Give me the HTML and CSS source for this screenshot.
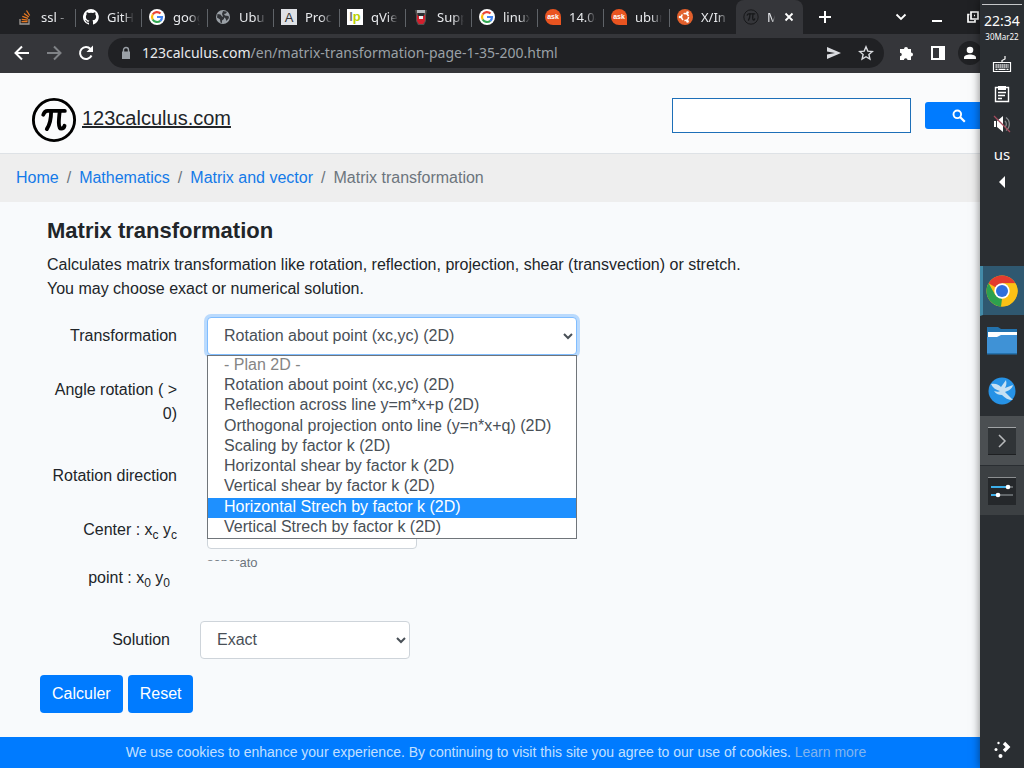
FILE: index.html
```html
<!DOCTYPE html>
<html lang="en">
<head>
    <meta charset="UTF-8">
    <meta name="viewport" content="width=device-width, initial-scale=1.0">
    <title>Matrix transformation - 123calculus.com</title>
    <link rel="stylesheet" href="styles.css">
</head>
<body>
    <div class="browser">
        <!-- Tab strip -->
        <div class="tab-strip">
            <div class="tab">
                <svg viewBox="0 0 16 16"><path d="M3 10v5h9v-5" fill="none" stroke="#a09c98" stroke-width="1.3"/><path d="M4.5 12.7h6M4.7 10.3l6 .8M5.3 7.4l5.7 2M7 4.5l4.8 3.6M9.5 1.5l3.2 5" stroke="#e87922" stroke-width="1.3"/></svg>
                <span>ssl - c</span>
            </div>
            <div class="tab">
                <svg viewBox="0 0 16 16"><path fill="#fff" d="M8 0a8 8 0 0 0-2.5 15.6c.4 0 .5-.2.5-.4v-1.5c-2.200.5-2.700-.9-2.700-.9-.4-1-.9-1.200-.9-1.200-.7-.5.1-.5.1-.5.800.1 1.200.8 1.200.8.700 1.200 1.900.9 2.300.7.100-.5.300-.9.500-1.100-1.800-.2-3.600-.9-3.600-4 0-.9.300-1.600.8-2.100-.1-.2-.4-1 .1-2.100 0 0 .7-.2 2.200.8a7.500 7.500 0 0 1 4 0c1.500-1 2.200-.8 2.200-.8.4 1.100.2 1.900.1 2.100.5.600.8 1.300.8 2.100 0 3.100-1.900 3.700-3.700 3.900.3.300.6.800.6 1.500v2.200c0 .2.100.5.600.4A8 8 0 0 0 8 0z"/></svg>
                <span>GitH</span>
            </div>
            <div class="tab">
                <svg viewBox="0 0 16 16"><use href="#google"/></svg>
                <span>goog</span>
            </div>
            <div class="tab">
                <svg viewBox="0 0 16 16"><circle cx="8" cy="8" r="7" fill="#9aa0a6"/><path fill="#303236" d="M2.500 5l3 .5 1.500 2 2 .5v2l-2 1.500v2.500l-1.500-.5-.5-3L2 8.500zM8 2l4 .8-1 1.700L9 5l1 1.500 3.500.5.500 2-2.500 3-1-2.500L8 7.500 7 5z"/></svg>
                <span>Ubu</span>
            </div>
            <div class="tab">
                <svg viewBox="0 0 16 16"><path fill="#dfe1e5" d="M0 0h16v16H0z"/><text x="8" y="13" class="mark mark-a">A</text></svg>
                <span>Proc</span>
            </div>
            <div class="tab">
                <svg viewBox="0 0 16 16"><path fill="#fff" d="M0 0h16v16H0z"/><text x="8" y="12" class="mark mark-lp"><tspan fill="#77787b">l</tspan><tspan fill="#b9d000">p</tspan></text></svg>
                <span>qVie</span>
            </div>
            <div class="tab">
                <svg viewBox="0 0 16 16"><path fill="#55504f" d="M2 1h12l-1 5v6l-2 4H5l-2-4V6z"/><path fill="#b8bcc0" d="M4 1h8v3H4z"/><path fill="#d0202e" d="M4 6h8v6l-2 3H6l-2-3z"/><path fill="#2c2c30" d="M5 4h6v3H5z"/><path fill="#eee" d="M6 7h4v3H6z"/></svg>
                <span>Supp</span>
            </div>
            <div class="tab">
                <svg viewBox="0 0 16 16"><use href="#google"/></svg>
                <span>linux</span>
            </div>
            <div class="tab">
                <svg viewBox="0 0 16 16"><path fill="#e95420" d="M8 0a8 8 0 0 1 8 8v8H8A8 8 0 1 1 8 0z"/><text x="8" y="10" class="mark mark-ask">ask</text></svg>
                <span>14.04</span>
            </div>
            <div class="tab">
                <svg viewBox="0 0 16 16"><path fill="#e95420" d="M8 0a8 8 0 0 1 8 8v8H8A8 8 0 1 1 8 0z"/><text x="8" y="10" class="mark mark-ask">ask</text></svg>
                <span>ubun</span>
            </div>
            <div class="tab last">
                <svg viewBox="0 0 16 16"><circle cx="8" cy="8" r="8" fill="#e2602c"/><circle cx="8" cy="8" r="3.500" fill="none" stroke="#fff" stroke-width="1.500" stroke-dasharray="6 1.300"/><g fill="#fff"><circle cx="3" cy="8" r="1.300"/><circle cx="10.500" cy="3.600" r="1.300"/><circle cx="10.500" cy="12.400" r="1.300"/></g></svg>
                <span>X/In</span>
            </div>
            <div class="tab active">
                <svg viewBox="0 0 16 16"><use href="#pi" stroke="#17181a"/></svg>
                <span>M</span>
                <button type="button" aria-label="Close tab"><svg viewBox="0 0 12 12"><path d="M2.500 2.500l7 7M9.500 2.500l-7 7" stroke="#fff" stroke-width="1.800"/></svg></button>
            </div>
            <button type="button" class="new-tab" aria-label="New tab"><svg viewBox="0 0 14 14"><path d="M7 1v12M1 7h12" stroke="#fff" stroke-width="2"/></svg></button>
            <div class="window-buttons">
                <button type="button" aria-label="Search tabs"><svg viewBox="0 0 14 14"><path d="M2.500 4.500L7 9l4.500-4.500" fill="none" stroke="#fff" stroke-width="1.800"/></svg></button>
                <button type="button" aria-label="Minimize"><svg viewBox="0 0 14 14"><path d="M2 11h10" stroke="#fff" stroke-width="2"/></svg></button>
                <button type="button" aria-label="Restore"><svg viewBox="0 0 14 14"><path d="M5 2h7v7H5zM8 5.500h1M3.500 4.500H2V12h7v-2" fill="none" stroke="#fff" stroke-width="1.700"/></svg></button>
            </div>
        </div>

        <!-- Toolbar -->
        <div class="toolbar">
            <button type="button" aria-label="Back"><svg viewBox="0 0 16 16"><path d="M15 8H2M8 1.500L1.500 8 8 14.500" fill="none" stroke="#fff" stroke-width="2"/></svg></button>
            <button type="button" aria-label="Forward"><svg viewBox="0 0 16 16"><path d="M1 8h13M8 1.500L14.500 8 8 14.500" fill="none" stroke="#808387" stroke-width="2"/></svg></button>
            <button type="button" aria-label="Reload"><svg viewBox="0 0 16 16"><path d="M13.500 10.500A6 6 0 1 1 12.500 4" fill="none" stroke="#fff" stroke-width="2"/><path d="M15 .5V7H8.500z" fill="#fff"/></svg></button>
            <div class="address">
                <svg class="lock" viewBox="0 0 10 14"><path d="M2.500 6V4a2.500 2.500 0 0 1 5 0v2" fill="none" stroke="#9aa0a6" stroke-width="1.400"/><path d="M1 5.500h8V13H1z" fill="#9aa0a6"/></svg>
                <span class="url"><b>123calculus.com</b>/en/matrix-transformation-page-1-35-200.html</span>
                <button type="button" aria-label="Share"><svg viewBox="0 0 16 16"><path d="M1 2l14 6-14 6V9.500L9 8 1 6.500z" fill="#dadce0"/></svg></button>
                <button type="button" aria-label="Bookmark"><svg viewBox="0 0 16 16"><path d="M8 1.800l1.800 4.300 4.600.4-3.500 3 1 4.600L8 11.700l-3.900 2.400 1-4.600-3.500-3 4.600-.4z" fill="none" stroke="#dadce0" stroke-width="1.400"/></svg></button>
            </div>
            <button type="button" aria-label="Extensions"><svg viewBox="0 0 16 16"><path d="M2 4h4a2 2 0 1 1 4 0h3v3.500a2 2 0 1 1 0 4V15H9.500a1.800 1.800 0 0 0-3.600 0H2v-3.700a1.800 1.800 0 0 0 0-3.600z" fill="#fff"/></svg></button>
            <button type="button" aria-label="Side panel"><svg viewBox="0 0 16 16"><path d="M2 2h12v12H2z" fill="none" stroke="#fff" stroke-width="2"/><path d="M9 2h5v12H9z" fill="#fff"/></svg></button>
            <button type="button" class="avatar" aria-label="Profile"><svg viewBox="0 0 16 16"><circle cx="8" cy="5" r="3.300" fill="#fff"/><path d="M2 14v-1.500C2 10.500 5 9.500 8 9.500s6 1 6 3V14z" fill="#fff"/></svg></button>
        </div>

        <!-- Page -->
        <div class="page">
            <header class="site-header">
                <a class="brand" href="#">
                    <svg viewBox="0 0 48 48"><use href="#pi" stroke="#000"/></svg>
                    <span>123calculus.com</span>
                </a>
                <form class="search">
                    <input type="text" aria-label="Search">
                    <button type="button" aria-label="Search"><svg viewBox="0 0 14 14"><circle cx="5.300" cy="5.300" r="3.800" fill="none" stroke="#fff" stroke-width="1.900"/><path d="M8 8l4.800 4.800" stroke="#fff" stroke-width="2.200"/></svg></button>
                </form>
            </header>

            <nav class="breadcrumb">
                <a href="#">Home</a>
                <a href="#">Mathematics</a>
                <a href="#">Matrix and vector</a>
                <span>Matrix transformation</span>
            </nav>

            <main>
                <div class="intro">
                    <h1>Matrix transformation</h1>
                    <p>Calculates matrix transformation like rotation, reflection, projection, shear (transvection) or stretch.<br>You may choose exact or numerical solution.</p>
                </div>

                <form class="calc-form">
                    <div class="options">
                        <div class="form-row">
                            <label for="transformation">Transformation</label>
                            <div class="field wide">
                                <select id="transformation" class="form-control focused">
                                    <option>Rotation about point (xc,yc) (2D)</option>
                                </select>
                                <ul class="dropdown" role="listbox" aria-label="Transformation">
                                    <li class="group">- Plan 2D -</li>
                                    <li role="option">Rotation about point (xc,yc) (2D)</li>
                                    <li role="option">Reflection across line y=m*x+p (2D)</li>
                                    <li role="option">Orthogonal projection onto line (y=n*x+q) (2D)</li>
                                    <li role="option">Scaling by factor k (2D)</li>
                                    <li role="option">Horizontal shear by factor k (2D)</li>
                                    <li role="option">Vertical shear by factor k (2D)</li>
                                    <li role="option" class="selected">Horizontal Strech by factor k (2D)</li>
                                    <li role="option">Vertical Strech by factor k (2D)</li>
                                </ul>
                            </div>
                        </div>
                        <div class="form-row tall">
                            <label for="angle">Angle rotation ( &gt; 0)</label>
                            <div class="field"><input type="text" id="angle" class="form-control"></div>
                        </div>
                        <div class="form-row">
                            <label for="direction">Rotation direction</label>
                            <div class="field"><select id="direction" class="form-control"></select></div>
                        </div>
                        <div class="form-row center-row">
                            <label for="center">Center : x<sub>c</sub> y<sub>c</sub></label>
                            <div class="field">
                                <input type="text" id="center" class="form-control">
                                <small><span class="cut">separ</span>ato</small>
                            </div>
                        </div>
                    </div>
                    <div class="form-row point-row">
                        <span class="label">point : x<sub>0</sub> y<sub>0</sub></span>
                    </div>
                    <div class="form-row">
                        <label for="solution">Solution</label>
                        <div class="field">
                            <select id="solution" class="form-control">
                                <option>Exact</option>
                            </select>
                        </div>
                    </div>
                    <div class="buttons">
                        <button type="button" class="btn">Calculer</button>
                        <button type="reset" class="btn">Reset</button>
                    </div>
                </form>
            </main>
        </div>

        <div class="cookies">We use cookies to enhance your experience. By continuing to visit this site you agree to our use of cookies. <a href="#">Learn more</a></div>
    </div>

    <!-- Desktop panel -->
    <aside class="panel">
        <div class="clock">
            <time>22:34</time>
            <small>30Mar22</small>
        </div>
        <div class="tray">
            <svg viewBox="0 0 20 20"><path d="M1.500 8.500h17v9h-17zM10 8V6.500l3-1.500V2" fill="none" stroke="#fff" stroke-width="1.200"/><path d="M3.500 11h13M3.500 13h13" stroke="#fff" stroke-width="1.300" stroke-dasharray="1.300 .7"/><path d="M3.500 15.300h2M6.500 15.300h7M14.500 15.300h2" stroke="#fff" stroke-width="1.200"/></svg>
            <svg viewBox="0 0 20 20"><path d="M3.500 3.500h13v14h-13z" fill="none" stroke="#fff" stroke-width="1.400"/><path d="M6 2h8v4H6z" fill="#fff"/><path d="M6 8.500h8M6 11.500h7M6 14.500h4" stroke="#fff" stroke-width="1.400"/></svg>
            <svg viewBox="0 0 20 20"><path d="M2 7h2v6H2zM5 7l6-5v16l-6-5z" fill="#fff"/><path d="M13 7a4 4 0 0 1 0 6M14 3.500a8 8 0 0 1 0 13" fill="none" stroke="#85888b" stroke-width="1.300"/><path d="M2 2l16 16" stroke="#a34b5c" stroke-width="1.300"/></svg>
            <span>us</span>
            <svg viewBox="0 0 20 20"><path d="M13 2v12L7 8z" fill="#fff"/></svg>
        </div>
        <div class="tasks">
            <button type="button" class="current" aria-label="Chrome"><svg viewBox="0 0 32 32"><circle cx="16" cy="16" r="15.500" fill="#fbc116"/><path d="M16 16L2.600 8.200A15.500 15.500 0 0 1 29.400 8.200H16z" fill="#e33b2e"/><path d="M2.600 8.200L9.300 20 16 23.700l-1 7.800A15.500 15.500 0 0 1 2.600 8.200z" fill="#2da04e"/><path d="M16 8.500h13.600A15.500 15.500 0 0 1 15 31.500L22.600 20z" fill="#fbc116"/><circle cx="16" cy="16" r="7.700" fill="#fff"/><circle cx="16" cy="16" r="6" fill="#2f6fdd"/></svg></button>
            <button type="button" aria-label="Files"><svg viewBox="0 0 32 32"><path d="M1 2h11l3 2h16v10H1z" fill="#2372ad"/><path d="M2 7h29v7H2z" fill="#fff"/><path d="M1 12h10l4-2h16v19H1z" fill="#3f92d6"/><path d="M1 28h30v1.500H1z" fill="#2472ae"/></svg></button>
            <button type="button" aria-label="Falkon"><svg viewBox="0 0 32 32"><circle cx="16" cy="16" r="13.500" fill="#2692e6"/><path d="M5 9c5-1 8 1 10 3l5-7c1 4 0 6-1 8l8-3c-1 4-5 6-8 7l8 8c-5 0-8-2-11-5-3 0-6-1-8-4 3 1 5 1 6 0-4-1-7-3-9-7z" fill="#c5e0f3"/></svg></button>
            <button type="button" class="running" aria-label="Konsole"><svg viewBox="0 0 32 32"><path d="M2 2h28v28H2z" fill="#303437"/><path d="M2 2.500h28" stroke="#a1a4a6"/><path d="M13 10l6 6-6 6" fill="none" stroke="#b8babc" stroke-width="1.500"/><path d="M2 29.500h28" stroke="#1e2022"/></svg></button>
            <button type="button" class="open" aria-label="System settings"><svg viewBox="0 0 32 32"><path d="M2 2h28v28H2z" fill="#25282b"/><path d="M2 2.500h28" stroke="#8c8f91"/><path d="M5 12h17M5 20h6" stroke="#3daee9" stroke-width="2"/><path d="M22 12h5M11 20h16" stroke="#616669" stroke-width="2"/><circle cx="22" cy="12" r="2.300" fill="#fff"/><circle cx="12" cy="20" r="2.300" fill="#fff"/></svg></button>
        </div>
        <button type="button" class="launcher" aria-label="Application launcher"><svg viewBox="0 0 20 20"><path d="M12 4l4 4-4 4" fill="none" stroke="#fff" stroke-width="3.400"/><g fill="#fff"><circle cx="6.500" cy="4" r="1.200"/><circle cx="4" cy="10.500" r="1.500"/><circle cx="8.500" cy="17" r="2"/></g></svg></button>
    </aside>

    <!-- Shared icons -->
    <svg class="defs">
        <symbol id="google" viewBox="0 0 16 16">
            <circle cx="8" cy="8" r="8" fill="#fff"/>
            <g fill="none" stroke-width="2.200">
                <path d="M11.500 4.500A5 5 0 0 0 3.700 5.500" stroke="#ea4335"/>
                <path d="M3.700 5.500a5 5 0 0 0 0 5" stroke="#fbbc05"/>
                <path d="M3.700 10.500a5 5 0 0 0 7.600 1.300" stroke="#34a853"/>
                <path d="M11.300 11.800A5 5 0 0 0 13 8H8" stroke="#4285f4"/>
            </g>
        </symbol>
        <symbol id="pi" viewBox="0 0 48 48">
            <circle cx="24" cy="24" r="21.500" fill="none" stroke-width="3"/>
            <path d="M12.800 18.500c.8-2.500 2-4 4.500-4h18" fill="none" stroke-width="4" stroke-linecap="round"/>
            <path d="M21 15c0 8-1 13-4.500 18.500M30 15c-1 8-2 18 1.500 18 2 0 3-1 3.500-3" fill="none" stroke-width="4" stroke-linecap="round"/>
        </symbol>
    </svg>
</body>
</html>
```

FILE: styles.css
```css
* {
    box-sizing: border-box;
}
body {
    margin: 0;
    min-height: 100vh;
    display: flex;
    font-family: "Liberation Sans", Arial, sans-serif;
    font-size: 16px;
    line-height: 24px;
    color: #212529;
    background: #f8fafc;
}
button {
    border: none;
    background: none;
    padding: 0;
    font: inherit;
    color: inherit;
    cursor: pointer;
}
svg {
    display: block;
    flex-shrink: 0;
}
.defs {
    position: absolute;
    width: 0;
    height: 0;
}
.browser {
    flex: 1;
    min-width: 0;
    display: flex;
    flex-direction: column;
    overflow: hidden;
}

/* Tab strip */
.tab-strip {
    display: flex;
    height: 34px;
    padding-left: 10px;
    background: #202124;
    color: #e8eaed;
    font-family: "Noto Sans", sans-serif;
    font-size: 13px;
}
.tab {
    display: flex;
    align-items: center;
    gap: 8px;
    flex: 0 0 66px;
    min-width: 0;
    padding: 0 8px 0 7px;
    position: relative;
}
.tab svg {
    width: 16px;
    height: 16px;
}
.tab span {
    flex: 1;
    min-width: 0;
    overflow: hidden;
    white-space: nowrap;
    mask-image: linear-gradient(to right, #000 60%, transparent);
}
.tab::after {
    content: "";
    position: absolute;
    right: 0;
    top: 9px;
    width: 1px;
    height: 18px;
    background: #5f6368;
}
.tab.last::after,
.tab.active::after {
    display: none;
}
.tab.active {
    flex-basis: 67px;
    background: #35363a;
    border-radius: 8px 8px 0 0;
}
.tab.active span {
    flex: 0 0 8px;
}
.tab.active button svg {
    width: 12px;
    height: 12px;
}
.mark {
    font-family: "Liberation Sans", Arial, sans-serif;
    text-anchor: middle;
}
.mark-a {
    font-size: 13px;
    fill: #333;
}
.mark-lp {
    font-size: 13px;
    font-weight: bold;
}
.mark-ask {
    font-size: 7px;
    font-weight: bold;
    fill: #fff;
}
.new-tab {
    margin-left: 15px;
}
.new-tab svg,
.window-buttons svg {
    width: 14px;
    height: 14px;
}
.window-buttons {
    display: flex;
    gap: 22px;
    margin-left: auto;
}

/* Toolbar */
.toolbar {
    display: flex;
    align-items: center;
    height: 39px;
    margin-right: -6px;
    padding: 0 0 1px 6px;
    background: #35363a;
}
.toolbar button {
    display: flex;
    justify-content: center;
    flex: 0 0 32px;
}
.toolbar svg {
    width: 16px;
    height: 16px;
}
.address {
    display: flex;
    align-items: center;
    flex: 1;
    height: 30px;
    margin: 0 6px;
    padding: 0 2px 0 13px;
    border-radius: 15px;
    background: #202124;
    color: #9aa0a6;
    font-family: "Noto Sans", sans-serif;
    font-size: 14px;
}
.address .lock {
    width: 10px;
    height: 14px;
    margin-right: 11px;
}
.url {
    flex: 1;
    white-space: nowrap;
    overflow: hidden;
}
.url b {
    font-weight: normal;
    color: #e8eaed;
}
.toolbar .avatar {
    flex-basis: 24px;
    height: 24px;
    margin: 0 4px;
    align-items: center;
    border-radius: 50%;
    background: #202124;
}

/* Site header */
.page {
    flex: 1;
}
.site-header {
    display: flex;
    align-items: center;
    justify-content: space-between;
    height: 81px;
    padding: 14px 0 0 31px;
    border-bottom: 1px solid #dee2e6;
    background: #fafbfc;
}
.brand {
    display: flex;
    align-items: center;
    gap: 5px;
    color: #212529;
    font-size: 20px;
}
.brand svg {
    width: 46px;
    height: 46px;
}
.brand span {
    padding-bottom: 5px;
}
.search {
    display: flex;
    align-items: center;
    gap: 14px;
    margin: -9px -13px 0 0;
}
.search input {
    width: 239px;
    height: 35px;
    padding: 0 8px;
    border: 1px solid #1d6fb8;
    background: #fff;
    font: inherit;
}
.search button {
    display: flex;
    align-items: center;
    justify-content: center;
    width: 68px;
    height: 27px;
    border-radius: 3px;
    background: #007bff;
}
.search svg {
    width: 14px;
    height: 14px;
}
.breadcrumb {
    display: flex;
    padding: 12px 16px;
    background: #eee;
}
.breadcrumb a {
    color: #147ae8;
    text-decoration: none;
}
.breadcrumb a::after {
    content: "/";
    padding: 0 8px;
    color: #6c757d;
}
.breadcrumb span {
    color: #6c757d;
}

/* Calculator */
main {
    padding: 15px 40px 24px;
}
.intro,
.options {
    padding-left: 7px;
}
h1 {
    margin: 0 0 8px;
    font-size: 22px;
    line-height: 28px;
}
p {
    margin: 0 0 16px;
}
.form-row {
    display: flex;
    gap: 30px;
    min-height: 38px;
    margin-bottom: 16px;
}
.form-row.tall {
    min-height: 70px;
}
.form-row label,
.form-row .label {
    width: 130px;
    padding-top: 7px;
    text-align: right;
}
sub {
    font-size: 12px;
    line-height: 0;
    vertical-align: -4px;
}
.field {
    position: relative;
    width: 210px;
}
.field.wide {
    width: 370px;
}
.form-control {
    display: block;
    width: 100%;
    height: 38px;
    padding: 5px 12px 7px;
    border: 1px solid #ced4da;
    border-radius: 4px;
    background: #fff;
    color: #495057;
    font: inherit;
}
.form-control.focused {
    border-color: #80bdff;
    box-shadow: 0 0 0 3px rgba(0, 123, 255, 0.25);
}
.dropdown {
    position: absolute;
    z-index: 1;
    top: 100%;
    left: 0;
    right: 0;
    display: flex;
    flex-direction: column;
    height: 184px;
    margin: 0;
    padding: 0;
    border: 1px solid #70757a;
    background: #fff;
    color: #495057;
    line-height: 18px;
    list-style: none;
}
.dropdown li {
    flex: 1;
    padding-left: 16px;
}
.dropdown .group {
    color: #858585;
}
.dropdown .selected {
    background: #1e90ff;
    color: #fff;
}
.center-row {
    height: 38px;
    margin-bottom: 10px;
}
.center-row small {
    display: block;
    margin-top: 4px;
    color: #6c757d;
    font-size: 13px;
    line-height: 20px;
}
.cut {
    display: inline-block;
    clip-path: inset(0 0 12px 0);
}
.point-row {
    margin-bottom: 24px;
}
.buttons {
    display: flex;
    gap: 5px;
}
.btn {
    height: 38px;
    padding: 0 12px;
    border-radius: 4px;
    background: #007bff;
    color: #fff;
}
.cookies {
    padding: 3px 0 4px 12px;
    background: #007bff;
    color: #c3e0ff;
    font-size: 14px;
    text-align: center;
}
.cookies a {
    color: #80b4ee;
    text-decoration: none;
}

/* Desktop panel */
.panel {
    position: relative;
    z-index: 2;
    display: flex;
    flex-direction: column;
    flex: 0 0 44px;
    background: #2a2e32;
    box-shadow: 0 0 9px rgba(0, 0, 0, 0.5);
    color: #fcfcfc;
    font-family: "Noto Sans", sans-serif;
    text-align: center;
}
.clock {
    height: 45px;
    margin: 4px 2px 0 2px;
    padding-top: 7px;
    border-top: 1px solid #c4c6c8;
}
.clock time,
.clock small {
    display: block;
}
.clock time {
    font-size: 14px;
    line-height: 18px;
}
.clock small {
    font-size: 8px;
    line-height: 14px;
}
.tray {
    display: grid;
    grid-auto-rows: 30px;
    place-items: center;
    font-size: 15px;
}
.tray svg,
.launcher svg {
    width: 20px;
    height: 20px;
}
.tasks {
    display: flex;
    flex-direction: column;
    margin-top: 67px;
}
.tasks button {
    display: flex;
    align-items: center;
    justify-content: center;
    height: 50px;
    border-bottom: 1px solid #2a2e32;
}
.tasks svg {
    width: 32px;
    height: 32px;
}
.tasks .current {
    background: #2f5870;
    border-left: 3px solid #438ba8;
    padding-right: 3px;
}
.tasks .running {
    background: #4b4f52;
}
.tasks .open {
    background: #3c4043;
}
.launcher {
    display: flex;
    justify-content: center;
    margin-top: auto;
    padding-bottom: 9px;
}
```
